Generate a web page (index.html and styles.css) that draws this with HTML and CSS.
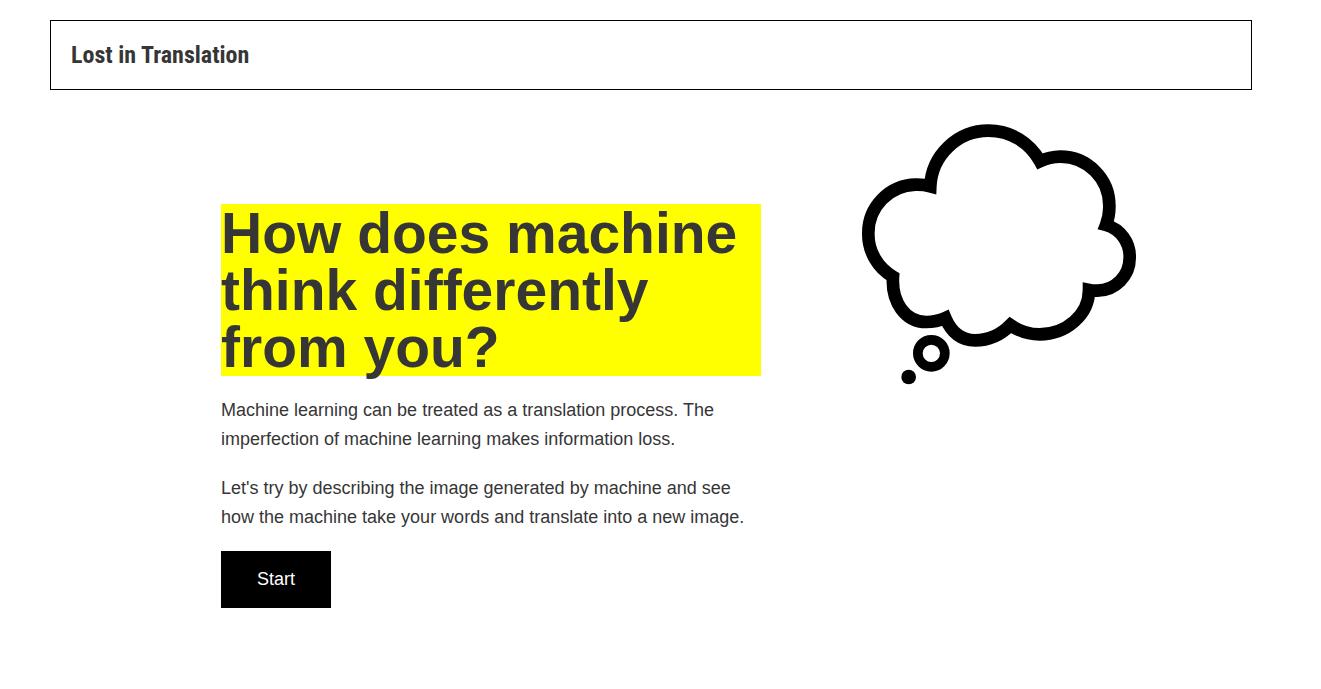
FILE: index.html
```html
<!DOCTYPE html>
<html lang="en">
<head>
<meta charset="utf-8">
<meta name="viewport" content="width=device-width, initial-scale=1">
<title>Lost in Translation</title>
<link rel="stylesheet" href="styles.css">
</head>
<body>
<div class="page">
  <header class="site-header">
    <p class="site-title">Lost in Translation</p>
  </header>
  <main class="hero">
    <section class="intro">
      <h1 class="headline">How does machine think differently from&nbsp;you?</h1>
      <p class="copy">Machine learning can be treated as a translation process. The imperfection of machine learning makes information loss.</p>
      <p class="copy">Let's try by describing the image generated by machine and see how the machine take your words and translate into a new image.</p>
      <button class="start" type="button">Start</button>
    </section>
    <svg class="thought" viewBox="0 0 900 870" fill="none" stroke="#000" aria-hidden="true">
      <path stroke-width="38" stroke-miterlimit="10" d="M241 229A175 175 0 0 1 416 62A175 175 0 0 1 570 154A147 147 0 0 1 631 140A147 147 0 0 1 778 288A147 147 0 0 1 768 345A98 98 0 0 1 839 444A98 98 0 0 1 742 542A98 98 0 0 1 717 540C717 615 648 673 569 673C537 673 505 662 481 645C453 674 415 691 375 691C330 691 303 664 286 624C268 632 248 636 229 636C165 636 124 575 129 500A147 147 0 0 1 55 371A145 145 0 0 1 197 224A147 147 0 0 1 241 229Z"/>
      <circle cx="244" cy="730" r="40.5" stroke-width="29"/>
      <circle cx="176" cy="801" r="22" fill="#000" stroke="none"/>
    </svg>
  </main>
</div>
</body>
</html>
```

FILE: styles.css
```css
* {
  box-sizing: border-box;
}

body {
  margin: 0;
  background: #fff;
  color: #363636;
  font-family: "Liberation Sans", Arial, sans-serif;
}

.page {
  padding: 20px 69px 40px 50px;
}

.site-header {
  padding: 20px;
  border: 1px solid #000;
}

.site-title {
  margin: 0;
  font-family: "Roboto Condensed", Roboto, sans-serif;
  font-size: 24px;
  font-weight: 700;
  line-height: 28px;
}

.hero {
  display: grid;
  grid-template-columns: 9fr 5fr;
  gap: 89px;
  align-items: start;
  padding: 20px 102px 0 171px;
}

.intro {
  padding-top: 94px;
}

.headline {
  margin: 0 0 20px;
  padding-top: 1px;
  background: #ff0;
  font-size: 57px;
  font-weight: 700;
  line-height: 57px;
}

.copy {
  margin: 0 0 20px;
  font-size: 18px;
  line-height: 29px;
}

.copy:last-of-type {
  margin-bottom: 19px;
}

.start {
  padding: 14px 36px;
  border: 0;
  background: #000;
  color: #fff;
  font-family: inherit;
  font-size: 18px;
  line-height: 29px;
}

.thought {
  display: block;
  width: 100%;
}
```
